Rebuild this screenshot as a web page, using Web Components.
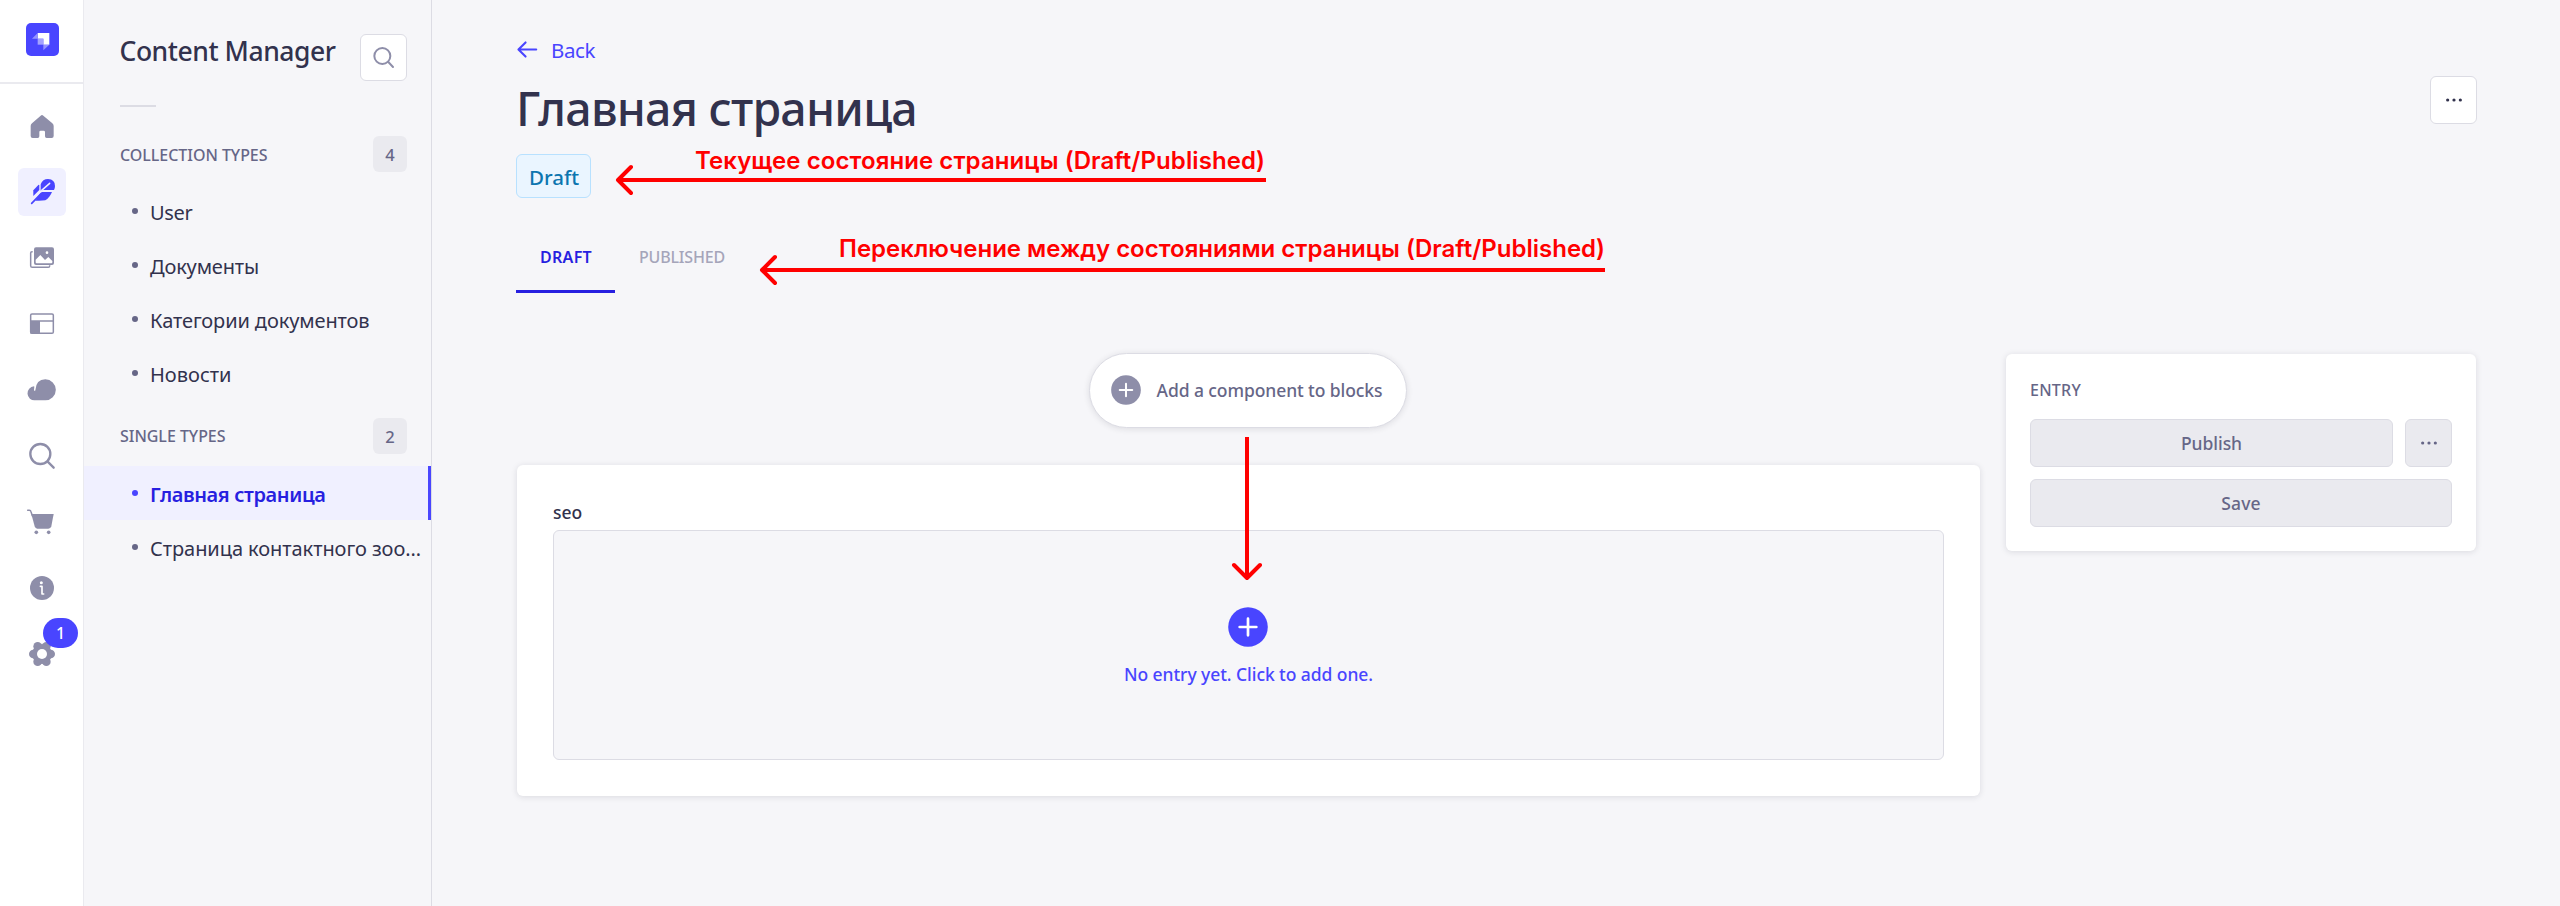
<!DOCTYPE html>
<html lang="ru">
<head>
<meta charset="utf-8">
<title>Content Manager</title>
<style>
  html, body { margin: 0; height: 100%; }
  body { background: #f6f6f9; font-family: "Noto Sans", "Open Sans", sans-serif; color: #32324d; overflow: hidden; }
</style>
</head>
<body>
<cm-app></cm-app>
<script>
const define = (name, html, init) => customElements.define(name, class extends HTMLElement {
  constructor() {
    super();
    const t = document.createElement('template');
    t.innerHTML = html;
    this.attachShadow({ mode: 'open' }).appendChild(t.content.cloneNode(true));
  }
  connectedCallback() { if (init) init(this); }
});

/* One line of text; w = advance width the line is tracked to. */
define('cm-text', `<style>
  :host { display: block; white-space: nowrap; flex: none; }
  span { display: inline-block; vertical-align: top; }
</style><span></span>`, el => {
  const s = el.shadowRoot.querySelector('span');
  s.textContent = el.getAttribute('text');
  el.style.fontSize = el.getAttribute('size') + 'px';
  el.style.lineHeight = (el.getAttribute('lh') || 24) + 'px';
  el.style.fontWeight = el.getAttribute('weight') || 400;
  const w = +el.getAttribute('w');
  if (w) {
    const n = s.textContent.length, natural = s.getBoundingClientRect().width;
    s.style.letterSpacing = ((w - natural) / n).toFixed(3) + 'px';
  }
});

const icons = {
  home: '<path d="M44 17Q48 13 52 17L79 40Q83 44 83 48V78Q83 84 77 84H62Q57 84 57 79V66Q57 62 53 62H44Q40 62 40 66V79Q40 84 35 84H20Q14 84 14 78V48Q14 44 18 40Z"/>',
  feather: '<path d="M44 43V25Q50 9 66 9Q87 10 87 30Q87 37 84 42H50L46 45Z"/><path d="M47 43L71 22" stroke="#f0f0ff" stroke-width="4.5" stroke-linecap="round"/><path d="M22 60V43L37 27Q40 25 40 29V42Z"/><path d="M40 56L48 48H78Q70 66 58 73Q45 75 28 74Z"/><path d="M17 82L46 52" stroke="currentColor" stroke-width="5" stroke-linecap="round"/>',
  images: '<rect x="24" y="16" width="60" height="53" rx="6"/><path d="M20 29H18Q14 29 14 33V71Q14 76 19 76H67Q71 76 71 72V70" fill="none" stroke="currentColor" stroke-width="4.5"/><path d="M29 53L43 39L57 54L67 45L79 57V61Q79 64 76 64H32Q29 64 29 61Z" fill="#fff"/><circle cx="63" cy="32" r="4" fill="#fff"/>',
  layout: '<rect x="14" y="18" width="68" height="58" rx="4" fill="none" stroke="currentColor" stroke-width="4.5"/><path d="M14 39H82" stroke="currentColor" stroke-width="4.5"/><path d="M13 39H42V77H13Z"/>',
  cloud: '<path d="M58 16A31.5 31.5 0 0 1 58 79H27A21 21 0 0 1 24 37Q25 37 25 38L24 48A2 2 0 0 0 28 49Q30 16 58 16Z"/>',
  search: '<g fill="none" stroke="currentColor" stroke-width="7" stroke-linecap="round"><circle cx="43" cy="42" r="30"/><path d="M65 65L83 83"/></g>',
  cart: '<path d="M5 13H10Q14 13 15 17L19 29" fill="none" stroke="currentColor" stroke-width="4.5" stroke-linecap="round"/><path d="M16 24H83L76 61Q74 68 67 68H34Q28 68 26 61Z"/><circle cx="31" cy="79" r="5.5"/><circle cx="68" cy="79" r="5.5"/>',
  info: '<circle cx="48" cy="48" r="36"/><circle cx="46" cy="32" r="4.5" fill="#fff"/><path d="M43 43H48V66H53" fill="none" stroke="#fff" stroke-width="5" stroke-linecap="round" stroke-linejoin="round"/>',
  gear: '<circle cx="48" cy="48" r="30"/><g><circle cx="74" cy="48" r="13"/><circle cx="22" cy="48" r="13"/><circle cx="61" cy="25" r="13"/><circle cx="35" cy="25" r="13"/><circle cx="61" cy="71" r="13"/><circle cx="35" cy="71" r="13"/></g><circle cx="48" cy="48" r="15" fill="#fff"/>',
  lens: '<g fill="none" stroke="currentColor" stroke-width="6" stroke-linecap="round"><circle cx="43" cy="42" r="24"/><path d="M61 60L75 75"/></g>',
  dots: '<circle cx="29" cy="48" r="4.8"/><circle cx="48" cy="48" r="4.8"/><circle cx="67" cy="48" r="4.8"/>',
  back: '<path d="M75 48H22M42 26L20 48L42 70" fill="none" stroke="currentColor" stroke-width="6.5" stroke-linecap="round" stroke-linejoin="round"/>',
  plus: '<circle cx="48" cy="48" r="47.5"/><path d="M48 28V68M28 48H68" stroke="#fff" stroke-width="6.5" stroke-linecap="round"/>'
};
define('cm-icon', `<style>
  :host { display: block; width: 32px; height: 32px; flex: none; }
  svg { display: block; width: 100%; height: 100%; overflow: visible; }
</style><svg viewBox="0 0 96 96" fill="currentColor"></svg>`, el => {
  el.shadowRoot.querySelector('svg').innerHTML = icons[el.getAttribute('name')];
});

define('cm-rail-item', `<style>
  :host { display: grid; place-items: center; width: 48px; height: 48px; border-radius: 6px; color: #8e8ea9; position: relative; }
  :host([active]) { background: #f0f0ff; color: #4945ff; }
  ::slotted(*) { position: absolute; left: 25px; top: -12px; width: 35px; height: 30px; border-radius: 15px; background: #4945ff; color: #fff; text-align: center; }
</style><cm-icon></cm-icon><slot></slot>`, el => {
  const i = el.shadowRoot.querySelector('cm-icon');
  i.setAttribute('name', el.getAttribute('icon'));
  i.remove(); el.shadowRoot.insertBefore(i, el.shadowRoot.querySelector('slot'));
});

define('cm-rail', `<style>
  :host { display: flex; flex-direction: column; align-items: center; width: 83px; flex: none; background: #fff; border-right: 1px solid #eaeaef; }
  .brand { width: 100%; border-bottom: 2px solid #eaeaef; display: flex; justify-content: center; box-sizing: border-box; padding-top: 23px; height: 84px; }
  .brand svg { width: 33px; height: 33px; margin-left: 1px; }
  nav { display: flex; flex-direction: column; gap: 18px; padding: 18px 0 0 1px; }
</style>
<div class="brand"><svg viewBox="0 0 99 99"><rect width="99" height="99" rx="15" fill="#4945ff"/><path d="M35 30H70V65H52V47H35Z" fill="#fff"/><path d="M35 47H52V65H35Z" fill="#a4a2ff"/><path d="M35 30V47H18ZM52 65H70L52 82Z" fill="#9593ff"/></svg></div>
<nav>
  <cm-rail-item icon="home"></cm-rail-item><cm-rail-item icon="feather" active></cm-rail-item>
  <cm-rail-item icon="images"></cm-rail-item><cm-rail-item icon="layout"></cm-rail-item>
  <cm-rail-item icon="cloud"></cm-rail-item><cm-rail-item icon="search"></cm-rail-item>
  <cm-rail-item icon="cart"></cm-rail-item><cm-rail-item icon="info"></cm-rail-item>
  <cm-rail-item icon="gear"><cm-text text="1" size="16" lh="30" weight="550"></cm-text></cm-rail-item>
</nav>`);

define('cm-nav-head', `<style>
  :host { display: flex; align-items: center; justify-content: space-between; height: 36px; padding: 0 24px 0 36px; color: #666687; }
  .n { width: 34px; height: 36px; border-radius: 6px; background: #eaeaef; text-align: center; }
</style><slot></slot><div class="n"><cm-text size="16.5" lh="38" weight="550"></cm-text></div>`, el => {
  const t = el.shadowRoot.querySelector('cm-text');
  const c = t.cloneNode(); c.setAttribute('text', el.getAttribute('count')); t.replaceWith(c);
});

define('cm-nav-link', `<style>
  :host { display: flex; align-items: center; height: 54px; box-sizing: border-box; padding-left: 48px; color: #32324d; }
  :host([low]) { padding-top: 3px; }
  i { width: 6px; height: 6px; border-radius: 50%; background: #666687; margin: 0 12px 4px 0; flex: none; }
  :host([active]) { background: #f0f0ff; color: #271fe0; border-right: 3px solid #4945ff; }
  :host([active]) i { background: #4945ff; }
</style><i></i><slot></slot>`);

define('cm-button', `<style>
  :host { display: flex; align-items: center; justify-content: center; box-sizing: border-box; height: 48px; border: 1px solid #dcdce4; border-radius: 6px; background: #fff; color: #32324d; }
  :host([square]) { width: 47px; flex: none; }
  :host([disabled]) { background: #eaeaef; color: #666687; }
</style><slot></slot>`);

define('cm-subnav', `<style>
  :host { display: block; width: 347px; flex: none; border-right: 1px solid #dcdce4; }
  header { display: flex; align-items: flex-start; justify-content: space-between; height: 71px; padding: 34px 24px 0 35.5px; }
  header cm-text { margin-top: 2px; }
  header cm-button { color: #8e8ea9; height: 47px; }
  hr { width: 36px; height: 2px; margin: 0 0 29px 36px; border: 0; background: #dcdce4; }
  .a { margin-bottom: 14px; } .b { margin: 16px 0 12px; }
</style>
<header><cm-text text="Content Manager" size="26.5" lh="30" weight="550" w="216"></cm-text><cm-button square><cm-icon name="lens"></cm-icon></cm-button></header>
<hr>
<cm-nav-head class="a" count="4"><cm-text text="COLLECTION TYPES" size="16" lh="28" weight="550" style="padding-top:1px" w="147.5"></cm-text></cm-nav-head>
<cm-nav-link><cm-text text="User" size="20" w="42.5"></cm-text></cm-nav-link>
<cm-nav-link><cm-text text="Документы" size="20" w="109"></cm-text></cm-nav-link>
<cm-nav-link><cm-text text="Категории документов" size="20" w="219.5"></cm-text></cm-nav-link>
<cm-nav-link><cm-text text="Новости" size="20" w="81.5"></cm-text></cm-nav-link>
<cm-nav-head class="b" count="2"><cm-text text="SINGLE TYPES" size="16" lh="24" weight="550" w="105.5"></cm-text></cm-nav-head>
<cm-nav-link active low><cm-text text="Главная страница" size="20" weight="600" w="175.5"></cm-text></cm-nav-link>
<cm-nav-link low><cm-text text="Страница контактного зоо…" size="20" w="271"></cm-text></cm-nav-link>`);

define('cm-card', `<style>
  :host { display: block; box-sizing: border-box; background: #fff; border-radius: 6px; box-shadow: 0 1px 6px rgba(33,33,52,.13); }
</style><slot></slot>`);

define('cm-page-head', `<style>
  :host { display: flex; justify-content: space-between; align-items: flex-start; }
  .back { display: flex; align-items: center; color: #4945ff; gap: 8px; height: 30px; margin-left: -4px; }
  .back cm-icon { width: 31px; height: 31px; margin-top: -2px; }
  h1 { margin: 13px 0 16px 0; font: inherit; }
  .badge { display: inline-flex; align-items: center; box-sizing: border-box; width: 75px; height: 44px; border: 1px solid #b8e1ff; border-radius: 6px; background: #eaf5ff; color: #0c75af; padding: 2px 0 0 12px; }
  cm-button { margin-top: 41px; }
</style>
<div>
  <div class="back"><cm-icon name="back"></cm-icon><cm-text text="Back" size="20.5" w="44"></cm-text></div>
  <h1><cm-text text="Главная страница" size="46.5" lh="60" weight="550" w="401"></cm-text></h1>
  <div class="badge"><cm-text text="Draft" size="20.5" weight="550" w="50"></cm-text></div>
</div>
<cm-button square><cm-icon name="dots"></cm-icon></cm-button>`);

define('cm-tabs', `<style>
  :host { display: flex; }
  div { height: 66px; display: flex; align-items: center; padding: 2px 23px 0 24px; color: #a5a5ba; border-bottom: 3px solid transparent; box-sizing: content-box; }
  .on { color: #271fe0; border-color: #271fe0; }
</style>
<div class="on"><cm-text text="DRAFT" size="16" weight="600" w="52"></cm-text></div>
<div><cm-text text="PUBLISHED" size="16" weight="550" w="86"></cm-text></div>`);

define('cm-blocks', `<style>
  :host { display: flex; flex-direction: column; align-items: center; width: 1463px; flex: none; }
  .pill { display: flex; align-items: center; box-sizing: border-box; width: 318px; height: 75px; border: 1px solid #dcdce4; border-radius: 38px; background: #fff; padding: 0 0 2px 21px; gap: 15.5px; color: #666687; box-shadow: 0 1px 6px rgba(33,33,52,.12); margin: 0 1px 37px 0; }
  .pill cm-icon { width: 30px; height: 30px; color: #8e8ea9; }
  cm-card { width: 100%; height: 331px; padding: 35px 36px 0; }
  .empty { box-sizing: border-box; height: 230px; margin-top: 6px; border: 1px solid #dcdce4; border-radius: 6px; background: #f6f6f9; color: #4945ff; display: flex; flex-direction: column; align-items: center; gap: 15px; padding: 76px 0 0 0; }
  .empty cm-icon { width: 40px; height: 40px; margin-right: 1px; }
</style>
<div class="pill"><cm-icon name="plus"></cm-icon><cm-text text="Add a component to blocks" size="17.5" weight="550" w="226"></cm-text></div>
<cm-card>
  <cm-text text="seo" size="17.5" weight="550" w="29"></cm-text>
  <div class="empty"><cm-icon name="plus"></cm-icon><cm-text text="No entry yet. Click to add one." size="17.5" weight="550" w="249"></cm-text></div>
</cm-card>`);

define('cm-entry', `<style>
  :host { display: block; width: 470px; flex: none; margin-top: 1px; }
  cm-card { height: 197px; padding: 24px; }
  .label { color: #666687; display: block; margin-bottom: 17px; }
  .row { display: flex; gap: 12px; margin-bottom: 12px; }
  .row cm-button:first-child { flex: 1; }
</style>
<cm-card>
  <cm-text class="label" text="ENTRY" size="16" weight="550" w="51"></cm-text>
  <div class="row"><cm-button disabled><cm-text text="Publish" size="17.5" weight="550" w="61"></cm-text></cm-button><cm-button square disabled><cm-icon name="dots"></cm-icon></cm-button></div>
  <cm-button disabled><cm-text text="Save" size="17.5" weight="550" w="39.5"></cm-text></cm-button>
</cm-card>`);

/* Red notes and arrows that lie over the page. */
define('cm-notes', `<style>
  :host { position: absolute; inset: 0; color: #f00; font-family: Inter, sans-serif; pointer-events: none; }
  svg { position: absolute; inset: 0; }
  cm-text { position: absolute; }
  .one { left: 695px; top: 145px; } .two { left: 839px; top: 233px; }
</style>
<svg width="2560" height="906" fill="none" stroke="#f00" stroke-width="4">
  <path d="M618 180H1266M762 270H1605M1247 437V577"/>
  <path d="M631 167L618 180L631 193M775 257L762 270L775 283M1234 565L1247 578L1260 565" stroke-linecap="round" stroke-linejoin="round"/>
</svg>
<cm-text class="one" text="Текущее состояние страницы (Draft/Published)" size="24" lh="32" weight="600" w="570"></cm-text>
<cm-text class="two" text="Переключение между состояниями страницы (Draft/Published)" size="24" lh="32" weight="600" w="766"></cm-text>`);

define('cm-app', `<style>
  :host { display: flex; height: 906px; position: relative; }
  main { flex: 1; min-width: 0; padding: 35px 83px 0 84px; }
  cm-tabs { margin: 24px 0 60px; }
  .cols { display: flex; gap: 26px; padding-left: 1px; align-items: flex-start; }
</style>
<cm-rail></cm-rail>
<cm-subnav></cm-subnav>
<main>
  <cm-page-head></cm-page-head>
  <cm-tabs></cm-tabs>
  <div class="cols"><cm-blocks></cm-blocks><cm-entry></cm-entry></div>
</main>
<cm-notes></cm-notes>`);
</script>
</body>
</html>
